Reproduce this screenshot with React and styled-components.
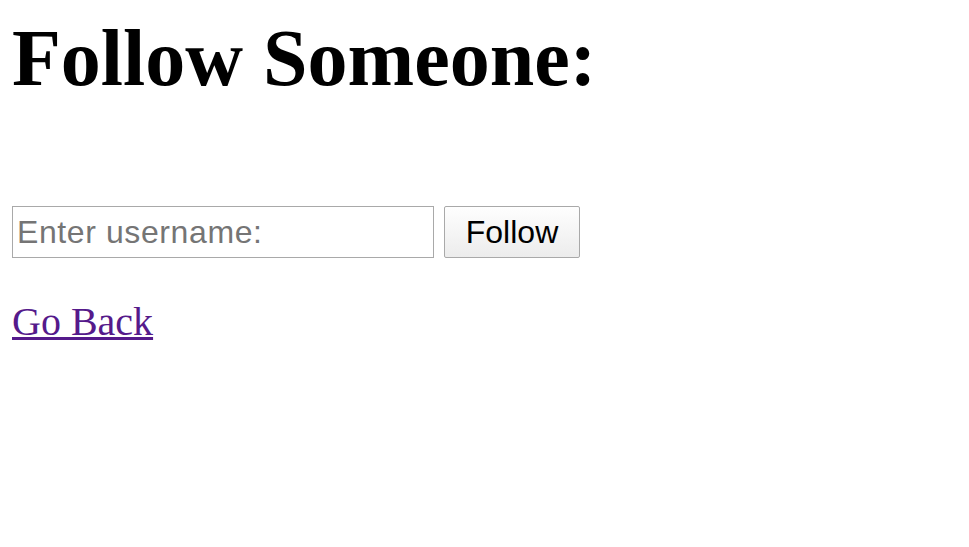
import React from 'react';
import styled, { createGlobalStyle } from 'styled-components';

const GlobalStyle = createGlobalStyle`
    body {
        margin: 0;
        background: #fff;
        font-family: "Liberation Serif", "Times New Roman", serif;
    }
`;

const Page = styled.div`
    padding: 0 12px;
`;

const Title = styled.h1`
    margin: 13px 0 0;
    font-size: 80px;
    font-weight: bold;
    color: #000;
`;

const FollowForm = styled.form`
    display: flex;
    align-items: stretch;
    gap: 10px;
    margin-top: 102px;
`;

const UsernameInput = styled.input`
    box-sizing: border-box;
    width: 422px;
    height: 52px;
    padding: 0 4px;
    border: 1px solid #a9a9a9;
    border-radius: 0;
    font-family: "Liberation Sans", Arial, sans-serif;
    font-size: 32px;
    letter-spacing: 0.6px;
    color: #000;
    outline: none;
    &::placeholder {
        color: #757575;
    }
`;

const FollowButton = styled.button`
    box-sizing: border-box;
    width: 136px;
    height: 52px;
    padding: 0;
    border: 1px solid #a9a9a9;
    border-radius: 2px;
    background: linear-gradient(#fefefe, #ececec);
    font-family: "Liberation Sans", Arial, sans-serif;
    font-size: 32px;
    color: #000;
`;

const BackLink = styled.a`
    display: inline-block;
    margin-top: 40px;
    font-size: 40px;
    color: #551a8b;
    text-decoration: underline;
    text-decoration-thickness: 3px;
`;

export default function App() {
    return (
        <Page>
            <GlobalStyle />
            <Title>Follow Someone:</Title>
            <FollowForm onSubmit={e => e.preventDefault()}>
                <UsernameInput type="text" placeholder="Enter username:" />
                <FollowButton type="submit">Follow</FollowButton>
            </FollowForm>
            <BackLink href="#">Go Back</BackLink>
        </Page>
    );
}
